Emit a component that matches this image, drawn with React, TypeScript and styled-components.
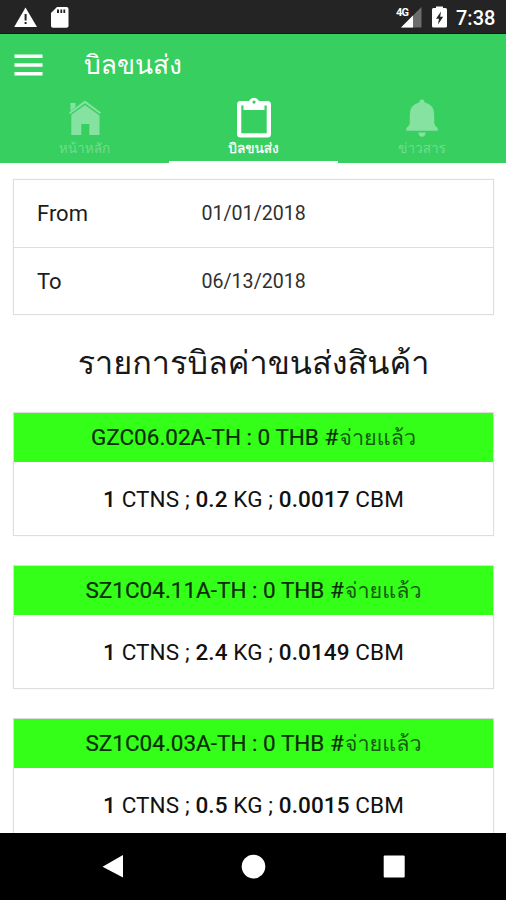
import React from 'react';
import styled, { createGlobalStyle } from 'styled-components';

const Global = createGlobalStyle`
  * { box-sizing: border-box; }
  body { margin: 0; background: #fff; font-family: Roboto, Loma, sans-serif; }
  svg { display: block; }
`;

const Screen = styled.div`
  display: flex;
  flex-direction: column;
  width: 506px;
  height: 900px;
  overflow: hidden;
  background: #fff;
`;

const StatusBar = styled.div`
  flex: none;
  height: 34px;
  display: flex;
  justify-content: space-between;
  background: #242424;
  border-bottom: 1px solid #1b1420;
`;

const Clock = styled.span`
  width: 50px;
  padding-top: 6px;
  color: #fff;
  font-size: 20px;
  font-weight: 500;
  line-height: 24px;
  white-space: nowrap;
`;

const StatusRight = styled.div`
  display: flex;
`;

const Header = styled.header`
  flex: none;
  height: 129px;
  display: flex;
  flex-direction: column;
  background: #36cf60;
`;

const TitleBar = styled.div`
  height: 62px;
  display: flex;
  align-items: center;
  padding-left: 14px;
`;

const MenuButton = styled.button`
  width: 70px;
  padding: 0;
  border: 0;
  background: none;
`;

const PageName = styled.h1`
  margin: 0;
  color: #fff;
  font-size: 26.4px;
  font-weight: 400;
  line-height: 40px;
  white-space: nowrap;
`;

const Tabs = styled.nav`
  display: grid;
  grid-template-columns: 169px 169px 168px;
  height: 67px;
`;

const Tab = styled.div<{ $active?: boolean }>`
  display: flex;
  flex-direction: column;
  align-items: center;
  color: ${p => (p.$active ? '#fff' : '#86e2a0')};
  border-bottom: 2px solid ${p => (p.$active ? '#fff' : 'transparent')};
`;

const TabLabel = styled.span<{ $active?: boolean }>`
  height: 20px;
  font-size: 13.6px;
  line-height: 21px;
  font-weight: 400;
  -webkit-text-stroke: ${p => (p.$active ? '0.3px' : '0')};
  color: ${p => (p.$active ? '#fff' : '#72dc90')};
  white-space: nowrap;
`;

const Content = styled.main`
  flex: 1;
  min-height: 0;
  overflow: hidden;
  padding: 16px 12px 0 13px;
`;

const DateCard = styled.section`
  border: 1px solid #dedede;
  box-shadow: 0 0 1px #e4e4e4;
`;

const DateRow = styled.div`
  display: flex;
  align-items: center;
  height: 67px;
  padding-left: 23px;
  color: #1c1c1c;
  & + & { border-top: 1px solid #dedede; }
`;

const DateLabel = styled.span`
  width: 164.5px;
  font-size: 22px;
`;

const DateValue = styled.span`
  font-size: 19.6px;
  color: #303030;
`;

const Heading = styled.h2`
  height: 97px;
  margin: 0;
  color: #181818;
  font-size: 32.4px;
  font-weight: 400;
  line-height: 97px;
  text-align: center;
  white-space: nowrap;
`;

const BillCard = styled.article`
  height: 124px;
  margin-bottom: 29px;
  border: 1px solid #dedede;
  box-shadow: 0 0 1px #e4e4e4;
  text-align: center;
  font-size: 22.5px;
  color: #111;
  white-space: nowrap;
`;

const BillTitle = styled.div`
  height: 48.5px;
  line-height: 49px;
  background: #33ff19;
  color: #0e2c0a;
  -webkit-text-stroke: 0.2px;
`;

const BillStatus = styled.span`
  margin-left: 1px;
  font-size: 21.6px;
  color: #175c10;
  -webkit-text-stroke: 0;
`;

const BillDetails = styled.div`
  height: 73.5px;
  line-height: 74px;
  letter-spacing: 0.1px;
  b { font-weight: 500; }
`;

const NavBar = styled.footer`
  flex: none;
  height: 67px;
  background: #000;
`;

const bills = [
  { code: 'GZC06.02A-TH', kg: '0.2', cbm: '0.0017' },
  { code: 'SZ1C04.11A-TH', kg: '2.4', cbm: '0.0149' },
  { code: 'SZ1C04.03A-TH', kg: '0.5', cbm: '0.0015' },
];

const StatusLeftIcons = () => (
  <svg width="80" height="33" fill="#fff">
    <path d="M25.5 7.5 37 27H14.2Z" />
    <path d="M24.6 14h2v6.5h-2zM24.6 22h2v2h-2z" fill="#242424" />
    <path d="M57 7h9.5q2 0 2 2v17q0 1.8-2 1.8H53q-2 0-2-1.8V13Z" />
    <path d="M57 9.5h2v3.5h-2zM60.4 9.5h1.8v3.5h-1.8zM63.4 9.5h1.8v3.5h-1.8z" fill="#242424" />
  </svg>
);

const StatusRightIcons = () => (
  <svg width="60" height="33">
    <path d="M25.5 27.500V7L5 27.500Z" fill="#6d6d6d" />
    <path d="M17 27.500V15.500L5 27.500Z" fill="#fff" />
    <path d="M0 5H14.500V16.500H0Z" fill="#242424" />
    <text x="0" y="16" fontSize="11" fontWeight="700" fill="#fff" textLength="13">4G</text>
    <path d="M40 8V6.500h7V8h2.500q1.500 0 1.500 1.500V26q0 1.500-1.500 1.500h-12Q36 27.500 36 26V9.500Q36 8 37.500 8H40Z" fill="#fff" />
    <path d="M45 11.500 40 18.800h3l-1 5.700 5.200-7.700h-3Z" fill="#242424" />
  </svg>
);

const HomeIcon = () => (
  <svg width="36" height="42" fill="currentColor">
    <path d="M3.500 7h5v4l-5 4ZM18 4.600 34 16.400 32.800 18 18 7.200 3.200 18 2 16.400Z" />
    <path d="M18 9 32.500 19.400V39H22.300V28H14.300V39H4.300V18.800Z" />
  </svg>
);

const ClipboardIcon = () => (
  <svg width="36" height="42" fill="currentColor" fillRule="evenodd">
    <path d="M4.500 5h8.500q1-2 2.500-2.500a4.500 4.500 0 0 1 5 0Q22 3 23 5h8.500q3.500 0 3.500 3.500v29.500q0 3.500-3.500 3.500h-27Q1 41.500 1 38V8.500Q1 5 4.500 5ZM5.300 9.500v27.800h25.400V9.500H28.500v4.500h-21v-4.500ZM18 4.500a1.600 1.600 0 1 0 0 3.200 1.600 1.600 0 1 0 0-3.200Z" />
  </svg>
);

const BellIcon = () => (
  <svg width="36" height="42" fill="currentColor">
    <path d="M18 3.500q2.300 0 2.800 3Q30 8.500 30.200 18.500v8q0 3 3.500 5.500v2.800H2.300v-2.800q3.500-2.500 3.500-5.500v-8Q6 8.500 15.200 6.500 15.700 3.500 18 3.500ZM14.300 36.500h7.400q-.5 4.200-3.700 4.200t-3.700-4.200Z" />
  </svg>
);

export default function App() {
  return (
    <>
      <Global />
      <Screen>
        <StatusBar>
          <StatusLeftIcons />
          <StatusRight>
            <StatusRightIcons />
            <Clock>7:38</Clock>
          </StatusRight>
        </StatusBar>
        <Header>
          <TitleBar>
            <MenuButton aria-label="Menu">
              <svg width="29" height="22" fill="#fff">
                <path d="M.5 .5h28v3.500h-28zM.5 9.300h28v3.500h-28zM.5 18h28v3.500h-28z" />
              </svg>
            </MenuButton>
            <PageName>บิลขนส่ง</PageName>
          </TitleBar>
          <Tabs>
            <Tab><HomeIcon /><TabLabel>หน้าหลัก</TabLabel></Tab>
            <Tab $active><ClipboardIcon /><TabLabel $active>บิลขนส่ง</TabLabel></Tab>
            <Tab><BellIcon /><TabLabel>ข่าวสาร</TabLabel></Tab>
          </Tabs>
        </Header>
        <Content>
          <DateCard>
            <DateRow><DateLabel>From</DateLabel><DateValue>01/01/2018</DateValue></DateRow>
            <DateRow><DateLabel>To</DateLabel><DateValue>06/13/2018</DateValue></DateRow>
          </DateCard>
          <Heading>รายการบิลค่าขนส่งสินค้า</Heading>
          {bills.map(b => (
            <BillCard key={b.code}>
              <BillTitle>{b.code} : 0 THB #<BillStatus>จ่ายแล้ว</BillStatus></BillTitle>
              <BillDetails>
                <b>1</b> CTNS ; <b>{b.kg}</b> KG ; <b>{b.cbm}</b> CBM
              </BillDetails>
            </BillCard>
          ))}
        </Content>
        <NavBar>
          <svg width="506" height="67" fill="#fff">
            <path d="M123 22v22.500L102.500 33.800Z" />
            <circle cx="253.500" cy="33.600" r="11.800" />
            <rect x="383.700" y="22.500" width="21" height="22" rx="1" />
          </svg>
        </NavBar>
      </Screen>
    </>
  );
}
